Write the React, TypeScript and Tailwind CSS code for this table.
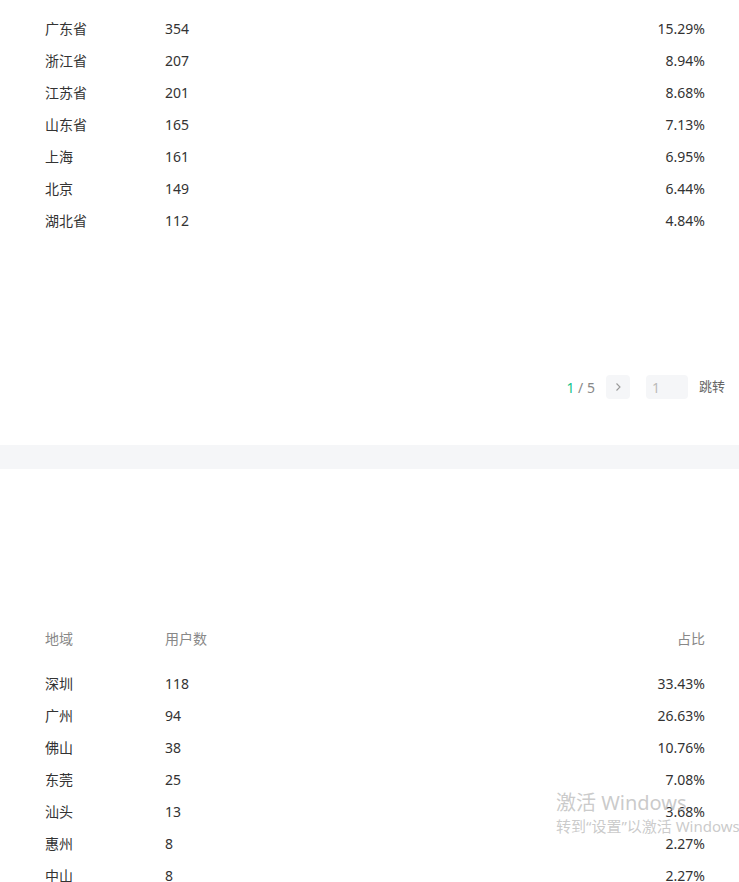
const provinces = [
  { name: "广东省", count: 354, ratio: "15.29%" },
  { name: "浙江省", count: 207, ratio: "8.94%" },
  { name: "江苏省", count: 201, ratio: "8.68%" },
  { name: "山东省", count: 165, ratio: "7.13%" },
  { name: "上海", count: 161, ratio: "6.95%" },
  { name: "北京", count: 149, ratio: "6.44%" },
  { name: "湖北省", count: 112, ratio: "4.84%" },
];

const cities = [
  { name: "深圳", count: 118, ratio: "33.43%" },
  { name: "广州", count: 94, ratio: "26.63%" },
  { name: "佛山", count: 38, ratio: "10.76%" },
  { name: "东莞", count: 25, ratio: "7.08%" },
  { name: "汕头", count: 13, ratio: "3.68%" },
  { name: "惠州", count: 8, ratio: "2.27%" },
  { name: "中山", count: 8, ratio: "2.27%" },
];

type Row = { name: string; count: number; ratio: string };

function TableRow({ row }: { row: Row }) {
  return (
    <div className="flex h-8 items-center text-[14px] text-[#333]">
      <div className="w-[120px]">{row.name}</div>
      <div className="flex-1">{row.count}</div>
      <div className="text-right">{row.ratio}</div>
    </div>
  );
}

function Pagination() {
  return (
    <div className="flex h-6 items-center justify-end pr-[14px] text-[14px]">
      <span className="text-[#888]">
        <span className="text-[#10c38a]">1</span> / 5
      </span>
      <button className="ml-[11px] flex h-6 w-6 items-center justify-center rounded-sm bg-[#f5f6f8]">
        <svg width="10" height="10" viewBox="0 0 10 10" fill="none">
          <path d="M3.5 1.5L7 5L3.5 8.5" stroke="#999" strokeWidth="1.1" />
        </svg>
      </button>
      <div className="ml-4 flex h-6 w-[42px] items-center rounded-sm bg-[#f5f6f8] pl-[6px] text-[#bbb]">
        1
      </div>
      <span className="ml-[11px] text-[13px] text-[#666]">跳转</span>
    </div>
  );
}

export default function App() {
  return (
    <div
      className="relative h-[882px] w-[739px] overflow-hidden bg-white"
      style={{ fontFamily: '"Noto Sans", "Noto Sans CJK SC", sans-serif' }}
    >
      {/* province list */}
      <section className="pt-3">
        <div className="pl-[45px] pr-[34px]">
          {provinces.map((r) => (
            <TableRow key={r.name} row={r} />
          ))}
        </div>
        <div className="mt-[139px]">
          <Pagination />
        </div>
      </section>

      <div className="mt-[46px] h-6 bg-[#f5f6f8]" />

      {/* city list */}
      <section className="pt-[153px] pl-[45px] pr-[34px]">
        <div className="flex h-8 items-center text-[14px] text-[#888]">
          <div className="w-[120px]">地域</div>
          <div className="flex-1">用户数</div>
          <div className="text-right">占比</div>
        </div>
        <div className="mt-[13px]">
          {cities.map((r) => (
            <TableRow key={r.name} row={r} />
          ))}
        </div>
      </section>

      {/* windows watermark */}
      <div className="pointer-events-none absolute left-[556px] top-[790px] whitespace-nowrap text-[#bdbdbd]/80">
        <div className="text-[20px] leading-[26px]">激活 Windows</div>
        <div className="text-[15px] leading-[20px]">转到“设置”以激活 Windows。</div>
      </div>
    </div>
  );
}
